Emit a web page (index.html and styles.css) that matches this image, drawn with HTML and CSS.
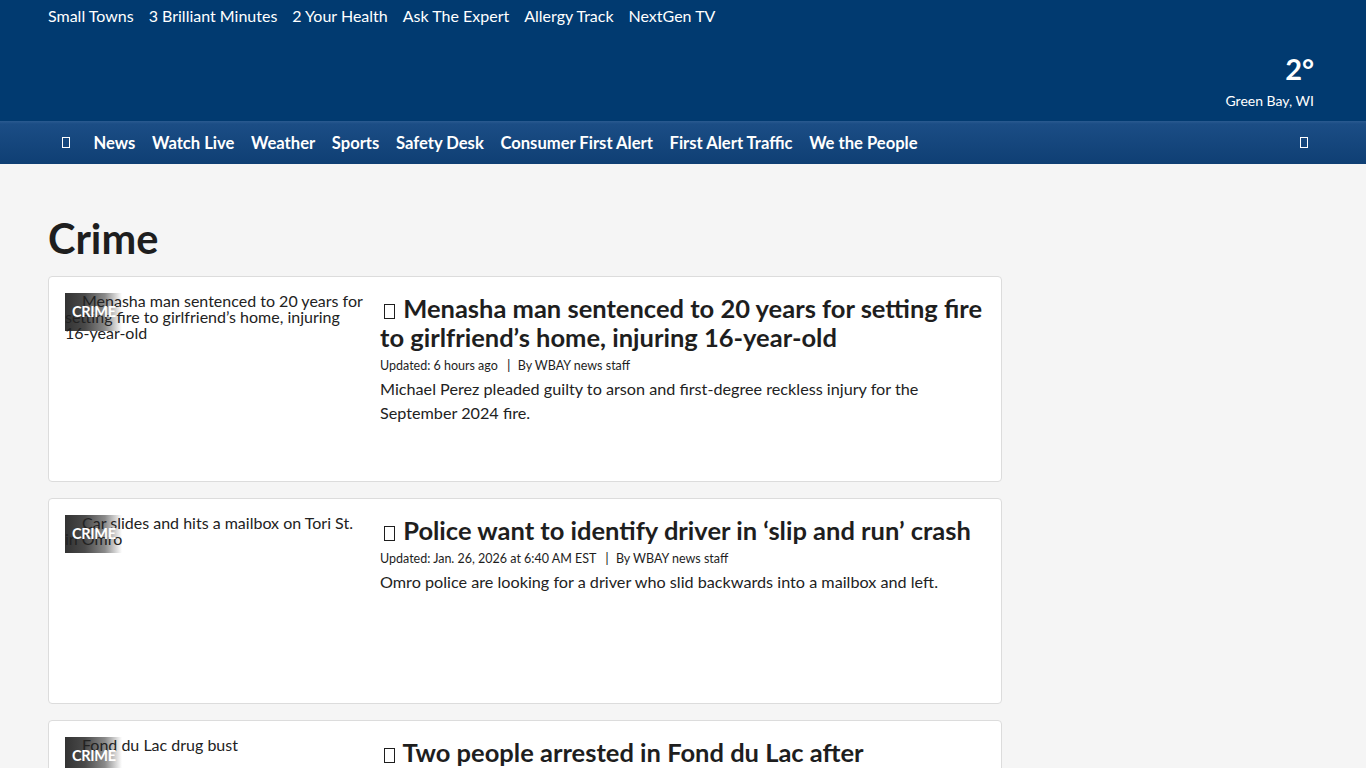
FILE: index.html
```html
<!DOCTYPE html>
<html lang="en">
<head>
<meta charset="utf-8">
<title>Crime</title>
<link rel="stylesheet" href="styles.css">
</head>
<body>
<header class="masthead">
  <nav class="toplinks">
    <a>Small Towns</a>
    <a>3 Brilliant Minutes</a>
    <a>2 Your Health</a>
    <a>Ask The Expert</a>
    <a>Allergy Track</a>
    <a>NextGen TV</a>
  </nav>
  <div class="weather">
    <div class="temp">2°</div>
    <div class="city">Green Bay, WI</div>
  </div>
</header>
<nav class="mainnav">
  <div class="mainnav-links">
    <span class="tofu"></span>
    <a>News</a>
    <a>Watch Live</a>
    <a>Weather</a>
    <a>Sports</a>
    <a>Safety Desk</a>
    <a>Consumer First Alert</a>
    <a>First Alert Traffic</a>
    <a>We the People</a>
  </div>
  <span class="tofu search"></span>
</nav>
<main class="content">
  <h1 class="page-title">Crime</h1>
  <article class="card">
    <div class="thumb">
      <div class="thumb-img"></div>
      <span class="alt">Menasha man sentenced to 20 years for setting fire to girlfriend’s home, injuring 16-year-old</span>
      <span class="label">CRIME</span>
    </div>
    <div class="body">
      <h2 class="headline"><span class="tofu dark"></span> Menasha man sentenced to 20 years for setting fire to girlfriend’s home, injuring 16-year-old</h2>
      <div class="meta">Updated: 6 hours ago <span class="sep">|</span> By WBAY news staff</div>
      <p class="desc">Michael Perez pleaded guilty to arson and first-degree reckless injury for the September 2024 fire.</p>
    </div>
  </article>
  <article class="card">
    <div class="thumb">
      <div class="thumb-img"></div>
      <span class="alt">Car slides and hits a mailbox on Tori St. in Omro</span>
      <span class="label">CRIME</span>
    </div>
    <div class="body">
      <h2 class="headline"><span class="tofu dark"></span> Police want to identify driver in ‘slip and run’ crash</h2>
      <div class="meta">Updated: Jan. 26, 2026 at 6:40 AM EST <span class="sep">|</span> By WBAY news staff</div>
      <p class="desc">Omro police are looking for a driver who slid backwards into a mailbox and left.</p>
    </div>
  </article>
  <article class="card">
    <div class="thumb">
      <div class="thumb-img"></div>
      <span class="alt">Fond du Lac drug bust</span>
      <span class="label">CRIME</span>
    </div>
    <div class="body">
      <h2 class="headline"><span class="tofu dark"></span> Two people arrested in Fond du Lac after investigation into drug sales</h2>
      <div class="meta">Updated: Jan. 25, 2026 <span class="sep">|</span> By WBAY news staff</div>
      <p class="desc">Police arrested two people.</p>
    </div>
  </article>
</main>
</body>
</html>
```
FILE: styles.css
```css
* { box-sizing: border-box; }
html, body { margin: 0; padding: 0; }
body {
  background: #f5f5f5;
  font-family: "Lato", "Noto Sans", sans-serif;
  color: #1e1e1e;
}
a { color: inherit; text-decoration: none; }

.masthead {
  background: #013a70;
  height: 121px;
  padding: 0 52px 0 48px;
  display: flex;
  justify-content: space-between;
  align-items: flex-start;
  color: #fff;
}
.toplinks {
  display: flex;
  gap: 15px;
  font-size: 16px;
  padding-top: 6px;
  line-height: 20px;
}
.weather {
  margin-top: 52px;
  text-align: right;
}
.temp {
  font-size: 29px;
  font-weight: 700;
  line-height: 34px;
}
.city {
  font-size: 14px;
  line-height: 18px;
  margin-top: 6px;
}

.mainnav {
  height: 43px;
  background: linear-gradient(#2a5a90 0, #1b4d85 3px, #0f3f74 100%);
  display: flex;
  align-items: center;
  justify-content: space-between;
  padding: 0 58px 0 62px;
  color: #fff;
}
.mainnav-links {
  display: flex;
  align-items: center;
  gap: 16.6px;
  font-weight: 700;
  font-size: 16.6px;
}
.mainnav-links .tofu { margin-right: 7px; }
.tofu {
  display: inline-block;
  width: 8px;
  height: 11px;
  border: 1px solid #fff;
  vertical-align: middle;
}
.tofu.dark {
  border-color: #1e1e1e;
  width: 11px;
  height: 15px;
  vertical-align: -1px;
  margin-left: 4px;
  margin-right: 2px;
}

.content {
  width: 954px;
  margin-left: 48px;
  padding-top: 50px;
}
.page-title {
  font-size: 41.5px;
  font-weight: 700;
  margin: 0 0 14px;
  line-height: 48px;
}
.card {
  background: #fff;
  border: 1px solid #dcdcdc;
  border-radius: 4px;
  height: 206px;
  padding: 16px;
  display: flex;
  gap: 15px;
  margin-bottom: 16px;
}
.thumb {
  width: 300px;
  flex: none;
  position: relative;
}
.thumb-img {
  position: absolute;
  left: 0;
  top: 0;
  width: 57px;
  height: 38px;
  background: linear-gradient(90deg, #333 0%, #4a4a4a 35%, #8a8a8a 70%, #fff 100%);
}
.label {
  position: absolute;
  z-index: 2;
  left: 7px;
  top: 10px;
  color: #fff;
  font-weight: 700;
  font-size: 14.5px;
  letter-spacing: -0.3px;
}
.alt {
  position: relative;
  z-index: 1;
  display: block;
  font-size: 16px;
  line-height: 16px;
  color: #222;
  text-indent: 17px;
}
.body { flex: 1; padding-top: 1px; }
.headline {
  margin: 0;
  font-size: 25.5px;
  line-height: 29px;
  font-weight: 700;
  color: #1e1e1e;
}
.meta {
  font-size: 12.5px;
  margin-top: 5px;
  line-height: 16px;
}
.sep { margin: 0 4px 0 6px; font-size: 14px; color: #1e1e1e; }
.desc {
  margin: 3px 0 0;
  font-size: 16.2px;
  line-height: 24px;
  color: #222;
}
```
